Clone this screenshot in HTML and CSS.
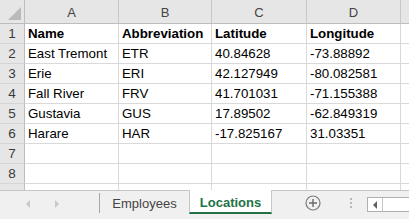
FILE: index.html
```html
<!DOCTYPE html>
<html>
<head>
<meta charset="utf-8">
<link rel="stylesheet" href="styles.css">
</head>
<body>
<div class="app">
  <div class="grid">
    <div class="corner hdr"><span class="tri"></span></div>
    <div class="hdr col">A</div>
    <div class="hdr col">B</div>
    <div class="hdr col">C</div>
    <div class="hdr col">D</div>
    <div class="hdr col end"></div>

    <div class="hdr row">1</div>
    <div class="cell b">Name</div><div class="cell b">Abbreviation</div><div class="cell b">Latitude</div><div class="cell b">Longitude</div><div class="cell end"></div>

    <div class="hdr row">2</div>
    <div class="cell">East Tremont</div><div class="cell">ETR</div><div class="cell">40.84628</div><div class="cell">-73.88892</div><div class="cell end"></div>

    <div class="hdr row">3</div>
    <div class="cell">Erie</div><div class="cell">ERI</div><div class="cell">42.127949</div><div class="cell">-80.082581</div><div class="cell end"></div>

    <div class="hdr row">4</div>
    <div class="cell">Fall River</div><div class="cell">FRV</div><div class="cell">41.701031</div><div class="cell">-71.155388</div><div class="cell end"></div>

    <div class="hdr row">5</div>
    <div class="cell">Gustavia</div><div class="cell">GUS</div><div class="cell">17.89502</div><div class="cell">-62.849319</div><div class="cell end"></div>

    <div class="hdr row">6</div>
    <div class="cell">Harare</div><div class="cell">HAR</div><div class="cell">-17.825167</div><div class="cell">31.03351</div><div class="cell end"></div>

    <div class="hdr row">7</div>
    <div class="cell"></div><div class="cell"></div><div class="cell"></div><div class="cell"></div><div class="cell end"></div>

    <div class="hdr row">8</div>
    <div class="cell"></div><div class="cell"></div><div class="cell"></div><div class="cell"></div><div class="cell end"></div>

    <div class="hdr row"></div>
    <div class="cell"></div><div class="cell"></div><div class="cell"></div><div class="cell"></div><div class="cell end"></div>
  </div>

  <div class="tabbar">
    <div class="nav">
      <svg width="8" height="10" viewBox="0 0 8 10"><path d="M6 1 L2 5 L6 9 Z" fill="#c8c8c8"/></svg>
      <svg width="8" height="10" viewBox="0 0 8 10"><path d="M2 1 L6 5 L2 9 Z" fill="#c8c8c8"/></svg>
    </div>
    <div class="sep"></div>
    <div class="tab">Employees</div>
    <div class="tab active">Locations</div>
    <div class="add">
      <svg width="16" height="16" viewBox="0 0 16 16"><circle cx="8" cy="8" r="7" fill="none" stroke="#7a7a7a" stroke-width="1.2"/><path d="M8 4 V12 M4 8 H12" stroke="#6a6a6a" stroke-width="1.4"/></svg>
    </div>
    <div class="dots"><i></i><i></i><i></i></div>
    <div class="scroll">
      <div class="sarrow"><svg width="6" height="8" viewBox="0 0 6 8"><path d="M5 0 L1 4 L5 8 Z" fill="#606060"/></svg></div>
      <div class="strack"></div>
    </div>
  </div>
</div>
</body>
</html>
```
FILE: styles.css
```css
html, body {
  margin: 0;
  padding: 0;
  width: 409px;
  height: 219px;
  overflow: hidden;
  background: #ffffff;
}
.app {
  width: 409px;
  height: 219px;
  display: flex;
  flex-direction: column;
  font-family: "Liberation Sans", Arial, sans-serif;
}
.grid {
  display: grid;
  grid-template-columns: 25px 94px 93px 95px 94px 1fr;
  grid-template-rows: 24px repeat(9, 20px);
  height: 190px;
  overflow: hidden;
  flex: none;
}
.hdr {
  background: #e6e6e6;
  color: #444444;
  font-size: 13px;
  box-sizing: border-box;
  display: flex;
  align-items: center;
  justify-content: center;
}
.hdr.col {
  border-right: 1px solid #c8c8c8;
  border-bottom: 1px solid #bdbdbd;
  padding-top: 2px;
}
.hdr.col.end {
  border-right: none;
}
.corner {
  border-right: 1px solid #bdbdbd;
  border-bottom: 1px solid #bdbdbd;
  position: relative;
}
.tri {
  position: absolute;
  right: 3px;
  bottom: 3px;
  width: 0;
  height: 0;
  border-left: 13px solid transparent;
  border-bottom: 13px solid #bababa;
}
.hdr.row {
  border-right: 1px solid #bdbdbd;
  border-bottom: 1px solid #d4d4d4;
  font-size: 13.5px;
  color: #3a3a3a;
}
.cell {
  box-sizing: border-box;
  border-right: 1px solid #d9d9d9;
  border-bottom: 1px solid #d9d9d9;
  font-size: 13.3px;
  color: #000000;
  padding: 0 0 0 3px;
  display: flex;
  align-items: center;
  white-space: nowrap;
  overflow: hidden;
}
.cell.b {
  font-weight: bold;
}
.cell.end {
  border-right: none;
}
.tabbar {
  flex: 1;
  display: flex;
  align-items: stretch;
  background: #f0f0f0;
  border-top: 1px solid #c6c6c6;
  box-sizing: border-box;
  font-size: 13px;
}
.nav {
  width: 99px;
  display: flex;
  align-items: center;
  gap: 21px;
  padding-left: 24px;
  padding-bottom: 3px;
  box-sizing: border-box;
}
.sep {
  width: 1px;
  background: #a6a6a6;
  margin: 2px 0 6px;
}
.tab {
  width: 89px;
  display: flex;
  align-items: center;
  justify-content: center;
  color: #444444;
  padding-bottom: 3px;
  box-sizing: border-box;
}
.tab.active {
  width: 83px;
  background: #ffffff;
  color: #217346;
  font-weight: bold;
  border-left: 1px solid #c6c6c6;
  border-right: 1px solid #c6c6c6;
  border-bottom: 2px solid #217346;
  margin: -1px 0 5px;
  padding-bottom: 0;
  padding-top: 2px;
}
.add {
  width: 49px;
  display: flex;
  align-items: center;
  justify-content: flex-end;
  padding-bottom: 4px;
  box-sizing: border-box;
}
.dots {
  width: 46px;
  display: flex;
  flex-direction: column;
  align-items: flex-start;
  justify-content: center;
  gap: 2px;
  padding-left: 29px;
  padding-bottom: 4px;
  box-sizing: border-box;
}
.dots i {
  width: 2px;
  height: 2px;
  background: #b8b8b8;
  display: block;
}
.scroll {
  flex: 1;
  display: flex;
  margin: 6px 0 7px 0;
  border: 1px solid #b0b0b0;
  border-right: none;
  background: #ffffff;
}
.sarrow {
  width: 14px;
  display: flex;
  align-items: center;
  justify-content: center;
  border-right: 1px solid #c6c6c6;
}
.strack {
  flex: 1;
}
```
